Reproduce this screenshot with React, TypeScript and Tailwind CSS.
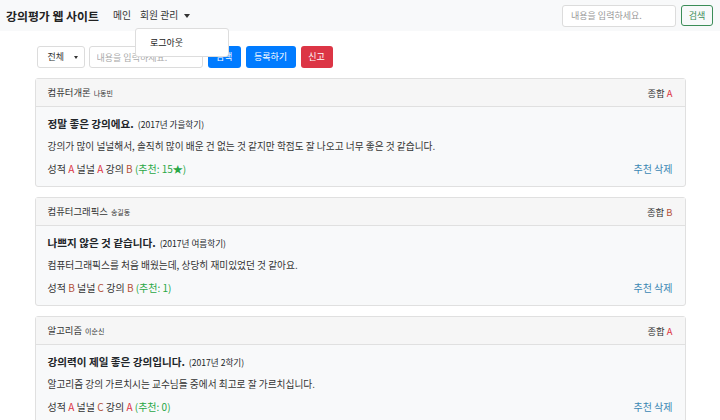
import React from "react";

const FONT = "font-['Noto_Sans_CJK_KR','Noto_Sans',sans-serif]";

type Review = {
  course: string;
  prof: string;
  total: string;
  title: string;
  term: string;
  body: string;
  grade: string;
  ease: string;
  lecture: string;
  likes: string;
};

const REVIEWS: Review[] = [
  {
    course: "컴퓨터개론",
    prof: "나동빈",
    total: "A",
    title: "정말 좋은 강의에요.",
    term: "(2017년 가을학기)",
    body: "강의가 많이 널널해서, 솔직히 많이 배운 건 없는 것 같지만 학점도 잘 나오고 너무 좋은 것 같습니다.",
    grade: "A",
    ease: "A",
    lecture: "B",
    likes: "15★",
  },
  {
    course: "컴퓨터그래픽스",
    prof: "송길동",
    total: "B",
    title: "나쁘지 않은 것 같습니다.",
    term: "(2017년 여름학기)",
    body: "컴퓨터그래픽스를 처음 배웠는데, 상당히 재미있었던 것 같아요.",
    grade: "B",
    ease: "C",
    lecture: "B",
    likes: "1",
  },
  {
    course: "알고리즘",
    prof: "이순신",
    total: "A",
    title: "강의력이 제일 좋은 강의입니다.",
    term: "(2017년 2학기)",
    body: "알고리즘 강의 가르치시는 교수님들 중에서 최고로 잘 가르치십니다.",
    grade: "A",
    ease: "C",
    lecture: "A",
    likes: "0",
  },
];

function Grade({ v }: { v: string }) {
  return (
    <span className={v === "A" ? "text-[#dc3545]" : "text-[#b5523b]"}>{v}</span>
  );
}

function ReviewCard({ r }: { r: Review }) {
  return (
    <div className="mb-[10px] rounded-[3px] border border-[#e0e0e0] bg-[#f8f9fa]">
      <div className="flex h-[28px] items-center justify-between border-b border-[#e0e0e0] bg-[#f6f6f6] px-[12px] text-[#333]">
        <div className="flex items-baseline gap-[3px] text-[9.4px] leading-[12px]">
          {r.course}
          <span className="text-[7px]">{r.prof}</span>
        </div>
        <div className="text-[9.4px] leading-[12px]">
          종합 <Grade v={r.total} />
        </div>
      </div>
      <div className="px-[12px] pt-[9px] pb-[11px]">
        <div className="flex h-[16px] items-baseline gap-[4px] text-[#212529]">
          <span className="text-[10.6px] font-bold leading-[16px]">{r.title}</span>
          <span className="text-[8.6px] leading-[16px]">{r.term}</span>
        </div>
        <div className="mt-[8px] text-[9.7px] leading-[13px] text-[#333]">{r.body}</div>
        <div className="mt-[9px] flex items-center justify-between text-[10px] leading-[13px] text-[#333]">
          <div>
            성적 <Grade v={r.grade} /> 널널 <Grade v={r.ease} /> 강의 <Grade v={r.lecture} />{" "}
            <span className="text-[#28a745]">(추천: {r.likes})</span>
          </div>
          <div className="text-[#3b87b3]">추천 삭제</div>
        </div>
      </div>
    </div>
  );
}

export default function App() {
  return (
    <div className={`relative h-[420px] overflow-hidden bg-white ${FONT}`}>
      {/* Navbar */}
      <nav className="flex h-[31px] items-center bg-[#f8f9fa] pl-[6px] pr-[7px]">
        <div className="text-[11.9px] font-bold text-[#222]">강의평가 웹 사이트</div>
        <div className="ml-[14px] text-[9.8px] text-[#333]">메인</div>
        <div className="ml-[9px] flex items-center text-[9.8px] text-[#333]">
          회원 관리
          <span className="ml-[6px] inline-block h-0 w-0 border-x-[3px] border-t-[4px] border-x-transparent border-t-[#333]" />
        </div>
        <div className="ml-auto flex items-center gap-[5px]">
          <input
            placeholder="내용을 입력하세요."
            className="h-[22px] w-[114px] rounded-[3px] border border-[#dcdcdc] bg-white px-[8px] text-[9px] outline-none placeholder:text-[#999]"
          />
          <button className="h-[21px] w-[32px] rounded-[3px] border border-[#3c8d58] text-[9px] text-[#3c8d58]">
            검색
          </button>
        </div>
      </nav>

      {/* Dropdown menu */}
      <div className="absolute left-[135px] top-[28px] z-10 flex h-[29px] w-[94px] items-center rounded-[3px] border border-[#ddd] bg-white pl-[14px] text-[9px] text-[#222]">
        로그아웃
      </div>

      <div className="mx-auto w-[651px]">
        {/* Search row */}
        <div className="mt-[15px] flex items-center pl-[2px]">
          <div className="flex h-[22px] w-[48px] items-center justify-between rounded-[3px] border border-[#dcdcdc] bg-white pl-[10px] pr-[6px] text-[9px] text-[#333]">
            전체
            <span className="inline-block h-0 w-0 border-x-[2px] border-t-[3px] border-x-transparent border-t-[#333]" />
          </div>
          <input
            placeholder="내용을 입력하세요."
            className="ml-[4px] h-[22px] w-[114px] rounded-[3px] border border-[#dcdcdc] bg-white px-[7px] text-[9px] outline-none placeholder:text-[#aaa]"
          />
          <button className="ml-[5px] h-[22px] w-[33px] rounded-[3px] bg-[#007bff] text-[9px] text-white">
            검색
          </button>
          <button className="ml-[5px] h-[22px] w-[50px] rounded-[3px] bg-[#007bff] text-[9px] text-white">
            등록하기
          </button>
          <button className="ml-[5px] h-[22px] w-[32px] rounded-[3px] bg-[#dc3545] text-[9px] text-white">
            신고
          </button>
        </div>

        {/* Reviews */}
        <div className="mt-[10px]">
          {REVIEWS.map((r) => (
            <ReviewCard key={r.course} r={r} />
          ))}
        </div>
      </div>
    </div>
  );
}
